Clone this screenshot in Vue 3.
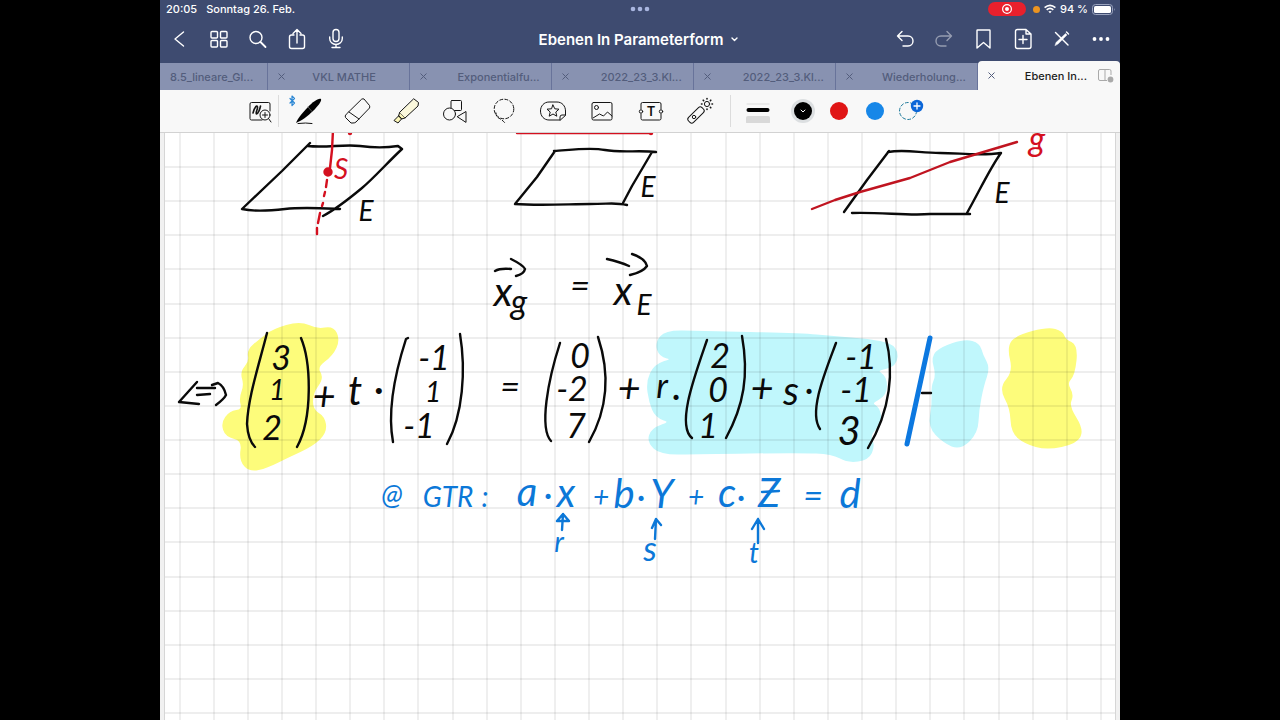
<script setup>
const tabs = [
  { label: '8.5_lineare_Gl...', first: true },
  { label: 'VKL MATHE', centered: true },
  { label: 'Exponentialfu...' },
  { label: '2022_23_3.Kl...' },
  { label: '2022_23_3.Kl...' },
  { label: 'Wiederholung...' },
]

const columns = Array.from({ length: 28 }, (_, i) => Math.round(179.5 + i * 34.13))
const rows = Array.from({ length: 17 }, (_, i) => Math.round(167 + i * 34.13))

// Rounded closed outline through the midpoints of a marker stroke's points
function blob(points) {
  const mid = (a, b) => `${(a[0] + b[0]) / 2} ${(a[1] + b[1]) / 2}`
  const n = points.length
  let d = `M${mid(points[n - 1], points[0])}`
  for (let i = 0; i < n; i++) {
    d += `Q${points[i][0]} ${points[i][1]} ${mid(points[i], points[(i + 1) % n])}`
  }
  return d + 'Z'
}

const markers = [
  { color: '#fdfc7b', d: blob([[260, 340], [273, 330], [300, 322], [317, 330], [333, 327], [339, 340], [332, 355], [316, 367], [323, 378], [312, 393], [312, 410], [324, 417], [326, 432], [313, 445], [287, 457], [267, 467], [250, 471], [240, 460], [243, 440], [226, 436], [222, 423], [230, 412], [243, 410], [240, 398], [245, 385], [241, 372], [250, 362], [248, 350]]) },
  { color: '#fdfc7b', d: blob([[1008, 347], [1017, 336], [1048, 328], [1062, 332], [1065, 340], [1077, 346], [1074, 375], [1066, 383], [1073, 395], [1068, 406], [1083, 430], [1076, 443], [1047, 449], [1025, 443], [1012, 432], [1011, 408], [1000, 388], [1014, 372]]) },
  { color: '#c0f7fc', d: blob([[932, 357], [941, 348], [965, 340], [979, 344], [982, 355], [989, 368], [983, 385], [978, 410], [977, 433], [960, 449], [944, 442], [929, 427], [933, 405], [932, 387], [937, 375]]) },
  { color: '#c0f7fc', d: blob([[700, 332], [666, 331], [656, 343], [660, 356], [674, 359], [655, 365], [647, 382], [650, 402], [656, 417], [672, 422], [652, 429], [648, 442], [661, 454], [700, 453], [800, 452], [832, 453], [848, 462], [868, 459], [874, 446], [869, 435], [881, 423], [879, 408], [870, 403], [886, 395], [886, 377], [875, 370], [896, 366], [897, 348], [880, 341], [833, 337], [800, 334]]) },
]

const ink = '#0a0a0a'
const red = '#d4101f'
const blue = '#0c78d8'
const notes = [
  ['S', 341, 179, 28, red], ['g', 1037, 151, 34, red],
  ['E', 366, 221, 28, ink], ['E', 648, 197, 28, ink], ['E', 1002, 203, 28, ink],
  ['x', 503, 306, 40, ink], ['g', 519, 314, 34, ink], ['=', 580, 298, 34, ink],
  ['x', 623, 305, 40, ink], ['E', 644, 315, 28, ink],
  ['3', 281, 370, 34, ink], ['1', 277, 400, 28, ink], ['2', 272, 440, 34, ink],
  ['+', 324, 410, 40, ink], ['t', 355, 405, 40, ink], ['·', 379, 403, 40, ink],
  ['-1', 434, 370, 34, ink], ['1', 433, 402, 28, ink], ['-1', 419, 438, 34, ink],
  ['=', 510, 399, 34, ink],
  ['0', 580, 368, 34, ink], ['-2', 572, 401, 34, ink], ['7', 576, 438, 34, ink],
  ['+', 629, 402, 40, ink], ['r', 662, 398, 34, ink], ['·', 676, 408, 34, ink],
  ['2', 720, 368, 34, ink], ['0', 718, 402, 34, ink], ['1', 708, 438, 34, ink],
  ['+', 762, 402, 40, ink], ['s', 791, 405, 40, ink], ['·', 809, 402, 34, ink],
  ['-1', 861, 369, 34, ink], ['-1', 856, 402, 34, ink], ['3', 849, 445, 40, ink],
  ['@', 392, 505, 28, blue], ['GTR', 448, 507, 28, blue], [':', 485, 507, 28, blue],
  ['a', 527, 506, 40, blue], ['·', 548, 507, 34, blue], ['x', 566, 507, 40, blue],
  ['+', 601, 507, 28, blue], ['b', 624, 508, 40, blue], ['·', 641, 509, 34, blue],
  ['Y', 662, 508, 40, blue], ['+', 696, 507, 28, blue], ['c', 727, 507, 40, blue],
  ['·', 741, 509, 34, blue], ['Z', 769, 507, 40, blue], ['=', 813, 508, 34, blue],
  ['d', 850, 508, 40, blue],
  ['r', 559, 552, 28, blue], ['s', 650, 561, 34, blue], ['t', 754, 563, 28, blue],
].map(([text, x, y, size, color]) => ({ text, x, y, size, color }))
</script>

<template>
  <div class="screen">
    <div class="tablet">
      <header class="top">
        <div class="status">
          <span class="clock">20:05</span>
          <span class="date">Sonntag 26. Feb.</span>
          <svg class="multitask" width="20" height="6" viewBox="0 0 20 6" fill="#a9b6e0"><circle cx="3" cy="3" r="2.3" /><circle cx="10" cy="3" r="2.3" /><circle cx="17" cy="3" r="2.3" /></svg>
          <div class="indicators">
            <span class="recording">
              <svg width="12" height="12" viewBox="0 0 12 12"><circle cx="6" cy="6" r="4.4" fill="none" stroke="#fff" stroke-width="1.2" /><circle cx="6" cy="6" r="2" fill="#fff" /></svg>
            </span>
            <span class="mic-dot"></span>
            <svg width="12" height="10" viewBox="0 0 12 10" fill="none" stroke="#fff" stroke-width="1.7"><path d="M.6 3.6Q6-1 11.4 3.6M2.7 5.9Q6 3 9.3 5.9" /><path d="M6 9.3L4.3 7.6Q6 6.3 7.7 7.6Z" fill="#fff" stroke="none" /></svg>
            <span>94 %</span>
            <svg width="24" height="11" viewBox="0 0 24 11"><rect x=".5" y=".5" width="20" height="10" rx="3" fill="none" stroke="#9ba4bf" /><rect x="2" y="2" width="17" height="7" rx="1.6" fill="#fff" /><path d="M22 4Q23.4 5.5 22 7Z" fill="#9ba4bf" /></svg>
          </div>
        </div>

        <nav class="nav">
          <div class="group">
            <button aria-label="Zurück"><svg viewBox="-13 -13 26 26"><path d="M3.5-7L-5 0L3.5 7" /></svg></button>
            <button aria-label="Übersicht"><svg viewBox="-13 -13 26 26"><rect x="-8" y="-7.5" width="6.5" height="6.5" rx="1" /><rect x="1.5" y="-7.5" width="6.5" height="6.5" rx="1" /><rect x="-8" y="1.5" width="6.5" height="6.5" rx="1" /><rect x="1.5" y="1.5" width="6.5" height="6.5" rx="1" /></svg></button>
            <button aria-label="Suchen"><svg viewBox="-13 -13 26 26"><circle cx="-2" cy="-1.5" r="6" /><path d="M2.5 3L7.5 8" stroke-width="1.8" /></svg></button>
            <button aria-label="Teilen"><svg viewBox="-13 -13 26 26"><path d="M-3-4H-5.5Q-7.5-4-7.5-2V7.5Q-7.5 9.5-5.5 9.5H5.5Q7.5 9.5 7.5 7.5V-2Q7.5-4 5.5-4H3M0 4V-9M-4-5.5L0-9.5L4-5.5" /></svg></button>
            <button aria-label="Aufnehmen"><svg viewBox="-13 -13 26 26"><rect x="-3" y="-9.5" width="6" height="12" rx="3" /><path d="M-6.3-2V-.5C-6.3 3-3.5 5.5 0 5.5S6.3 3 6.3-.5V-2M0 5.5V8.5M-4 8.5H4" /></svg></button>
          </div>
          <button class="title">Ebenen In Parameterform
            <svg width="7" height="5" viewBox="0 0 7 5"><path d="M1 1L3.5 3.5L6 1" /></svg>
          </button>
          <div class="group">
            <button aria-label="Rückgängig"><svg viewBox="-13 -13 26 26"><path d="M-4-7.5L-8.5-3L-4 1.5M-8.5-3H2C5-3 7-.8 7 2S5 7 2 7H-3" /></svg></button>
            <button class="faded" aria-label="Wiederholen"><svg viewBox="-13 -13 26 26"><path d="M2-7.5L6.5-3L2 1.5M6.5-3H-4C-7-3-9-.8-9 2S-7 7-4 7H1" /></svg></button>
            <button aria-label="Lesezeichen"><svg viewBox="-13 -13 26 26"><path d="M-6.5-9H5.5Q6-9 6-8.5V9L-.5 3.5L-7 9V-8.5Q-7-9-6.5-9Z" /></svg></button>
            <button aria-label="Seite hinzufügen"><svg viewBox="-13 -13 26 26"><path d="M-5.5-9.5H3L8-5V7.5Q8 9.5 6 9.5H-5.5Q-7.5 9.5-7.5 7.5V-7.5Q-7.5-9.5-5.5-9.5ZM3-9.5V-5H8M0-3.5V4.5M-4 .5H4" /></svg></button>
            <button aria-label="Nur-Lesen-Modus"><svg viewBox="-13 -13 26 26"><path d="M-6.5-6.5L6 6" /><path d="M-7 6.5L-6 3.5L3.5-5.5L5-4L-4 5Z" fill="#fff" stroke-width=".4" /><path d="M4.5-7L6.5-5" /></svg></button>
            <button aria-label="Mehr"><svg viewBox="-13 -13 26 26" class="solid"><circle cx="-6.5" cy="0" r="1.9" /><circle cx="0" cy="0" r="1.9" /><circle cx="6.5" cy="0" r="1.9" /></svg></button>
          </div>
        </nav>

        <div class="tabs">
          <div v-for="(tab, i) in tabs" :key="i" class="tab" :class="{ first: tab.first, centered: tab.centered }">
            <button v-if="!tab.first" class="close" aria-label="Tab schließen"><svg width="7" height="7" viewBox="0 0 7 7"><path d="M.5.5L6.5 6.5M6.5.5L.5 6.5" /></svg></button>
            <button class="label">{{ tab.label }}</button>
          </div>
          <div class="tab active">
            <button class="close" aria-label="Tab schließen"><svg width="7" height="7" viewBox="0 0 7 7"><path d="M.5.5L6.5 6.5M6.5.5L.5 6.5" /></svg></button>
            <button class="label">Ebenen In...</button>
            <svg class="split" width="16" height="14" viewBox="0 0 16 14"><path d="M9 11.5H2Q.5 11.5.5 10V2Q.5.5 2 .5H11.5Q13 .5 13 2V6M7 .5V11.5" fill="none" stroke="#a9a9a9" /><circle cx="12.5" cy="10.5" r="2.9" fill="#a9a9a9" /></svg>
          </div>
        </div>
      </header>

      <div class="tools">
        <button aria-label="Zoomfenster"><svg viewBox="-14 -14 28 28"><path d="M2 9H-8.5Q-10 9-10 7.5V-7Q-10-8.5-8.5-8.5H8.5Q10-8.5 10-7V0" /><path d="M-7 2C-5-5-3-6-2.5-4C-2-2-5 2-3.5 3C-2 3 0-2 .5-5" stroke-width="1.6" /><circle cx="5" cy="4" r="5" fill="#f8f8f8" /><path d="M8.5 7.5L11 11M2.5 4H7.5M5 1.5V6.5" /></svg></button>
        <span class="divider"></span>
        <button aria-label="Stift"><svg viewBox="-14 -14 28 28"><path d="M13-12C10-13 5-9 0-4C-5 1-10 7-12 12C-7 10 0 5 5 0C10-5 14-10 13-12Z" fill="#000" stroke="none" /><path d="M0-4L4 .5" stroke="#777" stroke-width=".7" /><path d="M-10 12.5Q-2 11.5 4 12.5" /><path d="M-18-12.5L-13.5-8L-16-5.5V-15L-13.5-12.5L-18-8" stroke="#2a86d4" stroke-width="1.2" /></svg></button>
        <button aria-label="Radierer"><svg viewBox="-14 -14 28 28"><path d="M5-12Q6-12.5 7-12L12.5-5.5Q13-4 12.5-3L-1 11Q-2 12-4 12H-6L-11.5 6.5Q-12.5 5-11 3.5ZM-8 1L2 8" /></svg></button>
        <button aria-label="Textmarker"><svg viewBox="-14 -14 28 28"><path d="M8-12L12.5-8.5L12-5L-1 7L-6.5 2Z" fill="#fbf8dc" /><path d="M-6.5 2L-7.5 5L-4.5 8L-1 7M-7.5 5L-12 9.5L-8 12L-4.5 8Z" fill="#fbf6b8" /></svg></button>
        <button aria-label="Formen"><svg viewBox="-14 -14 28 28"><rect x="-4" y="-10.5" width="10.5" height="10" rx="1" /><circle cx="-5.5" cy="3" r="6" fill="#f8f8f8" /><path d="M2.5 5.5L11 .5V11Z" fill="#f8f8f8" /></svg></button>
        <button aria-label="Lasso"><svg viewBox="-14 -14 28 28"><circle cx="0" cy="-2" r="9.8" stroke-dasharray="3 2.2" /><path d="M-8 2C-8 8-4 6 1 12" stroke-dasharray="3 2.2" /></svg></button>
        <button aria-label="Elemente"><svg viewBox="-14 -14 28 28"><path d="M7 9H-4C-9 9-12.5 5-12.5 0S-9-9-4-9H4C9-9 12.5-5 12.5 0V4ZM7 9V6Q7 4 9 4H12.5" /><path d="M0-6L1.8-2.2L6-1.8L2.8 1L3.8 5.2L0 3L-3.8 5.2L-2.8 1L-6-1.8L-1.8-2.2Z" /></svg></button>
        <button aria-label="Bild"><svg viewBox="-14 -14 28 28"><rect x="-10" y="-8.5" width="20" height="17.5" rx="1.5" /><circle cx="-5.5" cy="-3.5" r="2" /><path d="M-9 7L-2.5 3L1.5 5L5.5 1L10 5" /></svg></button>
        <button aria-label="Text"><svg viewBox="-14 -14 28 28"><path d="M-10-2V-7Q-10-8.5-8.5-8.5H8.5Q10-8.5 10-7V-2M10 3V7.5Q10 9 8.5 9H-8.5Q-10 9-10 7.5V3" /><circle cx="-10" cy=".5" r="1.7" /><circle cx="10" cy=".5" r="1.7" /><text x="0" y="5" text-anchor="middle" class="letter">T</text></svg></button>
        <button aria-label="Laserpointer"><svg viewBox="-14 -14 28 28"><rect x="-9.5" y="-3.5" width="19" height="7" rx="2.5" transform="translate(-4 4) rotate(-45)" /><circle cx="-6" cy="6" r="1.7" /><circle cx="7" cy="-7" r="2.6" /><path d="M7-12.5V-12M7-2V-1.5M1.5-7H2M12-7H12.5M3.2-10.8L3.6-10.4M10.4-3.6L10.8-3.2M10.8-10.8L10.4-10.4" stroke-width="1.6" /></svg></button>
        <span class="divider wide"></span>
        <button class="weight" aria-label="Strichstärke"><svg width="24" height="24" viewBox="0 0 24 24"><path d="M1 5H23" stroke="#dcdcdc" /><path d="M2.5 11H21.5" stroke="#000" stroke-width="4" /><rect x="0" y="17" width="24" height="8" rx="2" fill="#d9d9d9" stroke="none" /></svg></button>
        <div class="colors">
          <button class="swatch black" aria-label="Schwarz"><svg width="8" height="6" viewBox="0 0 8 6"><path d="M2 2L4 4L6 2" stroke="#fff" /></svg></button>
          <button class="swatch red" aria-label="Rot"></button>
          <button class="swatch blue" aria-label="Blau"></button>
          <button class="swatch more" aria-label="Farbe hinzufügen"><svg width="28" height="26" viewBox="0 0 28 26"><circle cx="11" cy="13" r="8.5" stroke="#1e7a9c" stroke-dasharray="3 2.3" /><circle cx="20" cy="8" r="6.2" fill="#0b66d8" stroke="none" /><path d="M20 5V11M17 8H23" stroke="#fff" stroke-width="1.3" /></svg></button>
        </div>
      </div>

      <main class="canvas">
        <svg viewBox="160 133 960 587" preserveAspectRatio="xMidYMin slice">
          <rect x="165" y="133" width="950" height="600" fill="#fff" />
          <path v-for="(m, i) in markers" :key="'m' + i" :d="m.d" :fill="m.color" :stroke="m.color" stroke-width="2" />
          <g stroke="#000" stroke-opacity=".09" stroke-width="1.4">
            <line v-for="x in columns" :key="'x' + x" :x1="x" :x2="x" y1="133" y2="733" />
            <line v-for="y in rows" :key="'y' + y" x1="165" x2="1115" :y1="y" :y2="y" />
          </g>
          <path d="M164.5 133V733M1115.5 133V733" stroke="#d6d6d6" />

          <g class="stroke" stroke="#0a0a0a">
            <path d="M310 143L282 171L242 209C255 212 268 211 285 209S318 208 340 209M308 146C325 148 345 144 360 146S385 148 398 146L402 149C388 162 374 178 362 188S338 208 323 216" />
            <path d="M555 151L537 177L515 204C540 206 570 204 590 204S615 202 627 205M554 151C570 150 590 147 605 150S640 150 656 152M652 152L632 186L623 203" />
            <path d="M889 151L867 180L844 212M888 152C905 149 920 153 940 153S980 156 1001 153C990 168 980 190 967 213M852 213C880 212 910 216 930 214H970" />
            <path d="M495 271Q500 268 511 269M511 259Q523 265 525 269Q524 274 516 276M607 259Q620 262 629 266M632 254Q645 258 647 266Q643 272 630 275" />
            <path d="M197 382L179 402L199 404M197 388H215M197 395L210 394M212 385L218 383Q224 386 226 395Q224 399 216 405" />
            <path d="M267 333C258 368 248 398 247 424Q248 440 255 447M301 338C311 362 313 418 297 447" />
            <path d="M408 338L406 339C396 370 387 410 393 442M460 334C466 370 463 415 447 444" />
            <path d="M560 343C548 380 539 428 551 441M598 337C609 370 610 405 589 442" />
            <path d="M707 340C695 375 676 425 692 438M742 336C749 375 744 405 726 438" />
            <path d="M836 343C826 370 808 412 820 429M886 339C894 370 891 410 868 448" />
            <path d="M922 393H931" />
          </g>
          <g class="stroke" stroke="#d4101f">
            <path d="M333 130L332 150L330 168" />
            <circle cx="328" cy="172" r="3.5" fill="#d4101f" />
            <path d="M327 180L326 187M325 192L324 196M323 203L322 206M320 213L318 223M317 228V234" />
            <path d="M517 133H652" /><circle cx="651" cy="133" r="1" /><circle cx="350" cy="133" r="1" />
            <path d="M812 209L835 200L860 192L910 178L950 162L1017 142" stroke="#c01420" />
          </g>
          <path class="stroke bar" stroke="#0c78e0" d="M930 338L907 444" />
          <g class="stroke" stroke="#0c78d8">
            <path d="M562 530L563 514L557 521H569L563 514M655 539L656 519L652 528M656 519L661 525M758 543V519L752 529M758 519L764 529" />
            <path d="M762 492L779 491" />
          </g>
          <text v-for="(n, i) in notes" :key="'n' + i" class="note" :x="n.x" :y="n.y" :font-size="n.size" :fill="n.color" text-anchor="middle">{{ n.text }}</text>
        </svg>
      </main>
    </div>
  </div>
</template>

<style>
body { background: #000; }
</style>

<style scoped>
.screen { display: flex; justify-content: center; min-height: 100vh; background: #000; font-family: Inter, "Liberation Sans", sans-serif; }
.tablet { display: flex; flex-direction: column; width: 75%; height: 100vh; overflow: hidden; background: #f8f8f8; }
button { display: flex; align-items: center; justify-content: center; padding: 0; border: 0; background: none; color: inherit; font: inherit; flex: none; }
.top { background: #3e4b70; color: #fff; }

.status { display: flex; align-items: center; position: relative; height: 18px; padding: 0 4px 0 6px; font-size: 11px; font-weight: 500; gap: 9px; }
.multitask { position: absolute; left: 50%; top: 6px; transform: translateX(-50%); }
.indicators { display: flex; align-items: center; gap: 4px; margin-left: auto; }
.recording { display: flex; align-items: center; justify-content: center; width: 38px; height: 14px; margin-right: 3px; border-radius: 7px; background: #e8202c; }
.mic-dot { width: 7px; height: 7px; border-radius: 50%; background: #ec9420; }

.nav { display: flex; align-items: center; justify-content: space-between; height: 42px; padding-bottom: 3px; }
.group { display: flex; }
.group button { width: 39px; height: 40px; }
.group svg { width: 26px; height: 26px; }
.nav svg { fill: none; stroke: #fff; stroke-width: 1.4; stroke-linecap: round; stroke-linejoin: round; }
.nav svg.solid { fill: #fff; stroke: none; }
.nav .faded { opacity: .45; }
.title { gap: 8px; margin-left: 36px; font-size: 15px; font-weight: 600; }

.tabs { display: flex; height: 27px; background: #8892b1; color: #535d7c; font-size: 11px; font-weight: 500; }
.tab { display: flex; flex: none; width: 14.8%; align-items: center; justify-content: space-between; padding: 0 11px 0 10px; border-right: 1px solid #68739a; box-sizing: border-box; }
.tab.first { flex: 1; }
.tab.centered { padding-right: 5px; }
.tab.centered .label { flex: 1; }
.close svg { fill: none; stroke: #535d7c; stroke-width: 1; }
.tab.active { height: 29px; margin-top: -2px; padding: 0 6px 0 10px; border: 0; border-radius: 4px 4px 0 0; background: #f8f8f8; color: #1c1c1c; }
.tab.active .label { margin-left: auto; margin-right: 11px; }

.tools { display: flex; align-items: center; height: 42px; padding-left: 75px; border-bottom: 1px solid #d2d2d2; background: #f8f8f8; }
.tools button { width: 49px; height: 42px; }
.tools svg { fill: none; stroke: #151515; stroke-width: 1; stroke-linecap: round; stroke-linejoin: round; }
.tools > button:not(.weight) svg { width: 28px; height: 28px; overflow: visible; }
.letter { fill: #111; stroke: none; font-size: 13px; font-weight: 600; }
.divider { width: 1px; height: 32px; margin: 0 4px 0 -6px; background: #dcdcdc; }
.divider.wide { margin: 0 2px 0 6px; }
.colors { display: flex; align-items: center; gap: 18px; margin-left: 12px; }
.tools .swatch { width: 18px; height: 18px; border-radius: 50%; }
.tools .black { background: #000; box-shadow: 0 0 0 3px #dcdfe1; }
.tools .red { background: #e01515; }
.tools .blue { background: #1787e8; }
.tools .more { width: 28px; height: 26px; margin-left: -5px; border-radius: 0; }

.canvas { flex: 1; min-height: 0; background: #f1f1f1; }
.canvas svg { display: block; width: 100%; height: 100%; }
.stroke { fill: none; stroke-width: 2.4; stroke-linecap: round; stroke-linejoin: round; }
.stroke.bar { stroke-width: 5; }
.note { font-family: Lato, "Open Sans", sans-serif; font-style: italic; font-weight: 400; }
</style>
